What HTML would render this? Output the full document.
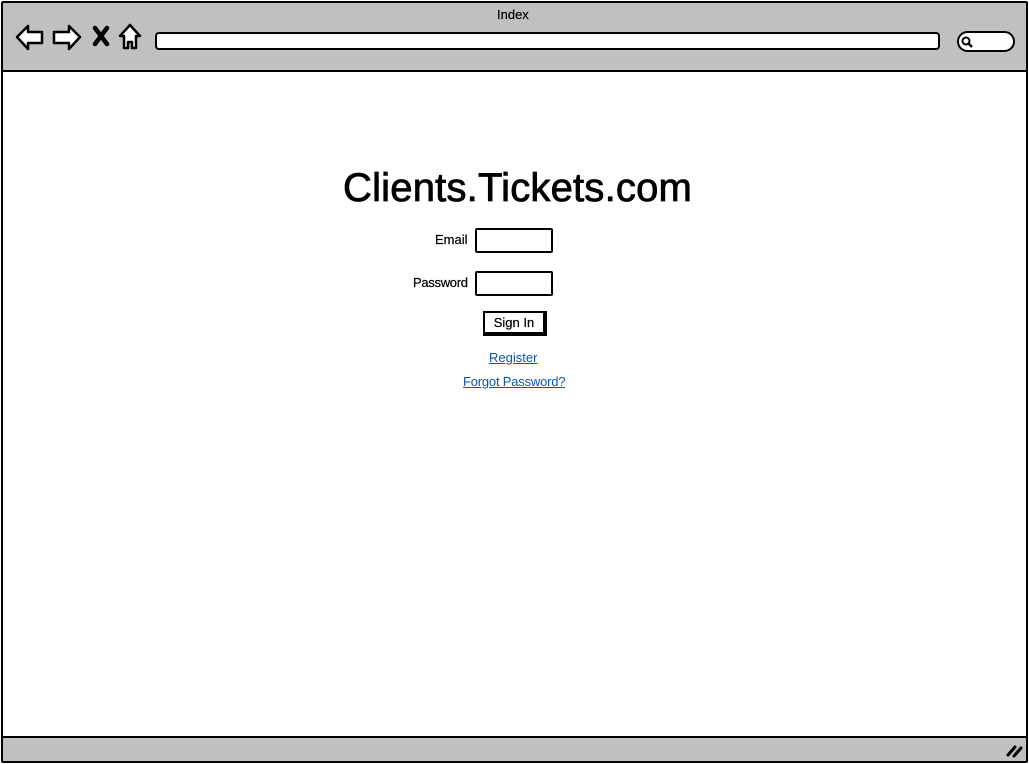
<!DOCTYPE html>
<html><head><meta charset="utf-8"><style>
*{margin:0;padding:0;box-sizing:border-box}
body{width:1029px;height:764px;background:#fff;font-family:"Liberation Sans",sans-serif;position:relative;overflow:hidden}
.frame{position:absolute;left:1px;top:1px;width:1027px;height:762px;border:2px solid #000;border-radius:2px}
.top{position:absolute;left:3px;top:3px;width:1023px;height:69px;background:#c0c0c0;border-bottom:2px solid #000}
.bot{position:absolute;left:3px;top:736px;width:1023px;height:25px;background:#c0c0c0;border-top:2px solid #000}
.t{position:absolute;font-size:13px;color:#000;-webkit-text-stroke:0.2px #000}
.url{position:absolute;left:155px;top:32px;width:785px;height:18px;background:#fff;border:2px solid #000;border-radius:4px}
.search{position:absolute;left:957px;top:31px;width:58px;height:21px;background:#fff;border:2px solid #000;border-radius:11px}
.inp{position:absolute;width:78px;height:25px;border:2px solid #000;border-radius:2px;background:#fff}
.btn{position:absolute;left:483px;top:311px;width:64px;height:25px;border:2px solid #000;border-right-width:4px;border-bottom-width:4px;background:#fff;font-size:13px;text-align:center;line-height:19px;-webkit-text-stroke:0.2px #000}
a{position:absolute;color:#0b56a8;text-decoration:underline;font-size:13px}
</style></head><body>
<div class="top"></div>
<div class="bot"></div>
<div class="frame"></div>
<div class="t" style="left:497px;top:7px">Index</div>
<svg style="position:absolute;left:14px;top:22px" width="130" height="30" viewBox="0 0 130 30">
<path d="M3 15 L14 4 L14 10 L28 10 L28 21 L14 21 L14 27 Z" fill="#fff" stroke="#000" stroke-width="2.5" stroke-linejoin="round"/>
<path d="M66 15 L55 4 L55 10 L40 10 L40 21 L55 21 L55 27 Z" fill="#fff" stroke="#000" stroke-width="2.5" stroke-linejoin="round"/>
<path d="M81 6 L93 22 M93 6 L81 22" stroke="#000" stroke-width="4.5" stroke-linecap="round"/>
<path d="M116 3 L106 14 L110 14 L110 26 L114 26 L114 20 L118 20 L118 26 L122 26 L122 14 L126 14 Z" fill="#fff" stroke="#000" stroke-width="2.5" stroke-linejoin="round"/>
</svg>
<div class="url"></div>
<div class="search"></div>
<svg style="position:absolute;left:960px;top:35px" width="14" height="14"><circle cx="6" cy="6" r="3.5" fill="none" stroke="#000" stroke-width="2"/><path d="M8.5 8.5 L12 12" stroke="#000" stroke-width="2.5"/></svg>
<svg style="position:absolute;left:1005px;top:742px" width="18" height="16"><path d="M3 13 L10 5 M9 14 L16 6" stroke="#000" stroke-width="3" stroke-linecap="round"/></svg>
<div class="t" style="left:343px;top:166px;font-size:40px;letter-spacing:0.2px;-webkit-text-stroke:0.8px #000">Clients.Tickets.com</div>
<div class="t" style="left:435px;top:232px">Email</div>
<div class="inp" style="left:475px;top:228px"></div>
<div class="t" style="left:413px;top:275px;letter-spacing:-0.3px">Password</div>
<div class="inp" style="left:475px;top:271px"></div>
<div class="btn">Sign In</div>
<a style="left:489px;top:350px">Register</a>
<a style="left:463px;top:374px;letter-spacing:-0.2px">Forgot Password?</a>
</body></html>
